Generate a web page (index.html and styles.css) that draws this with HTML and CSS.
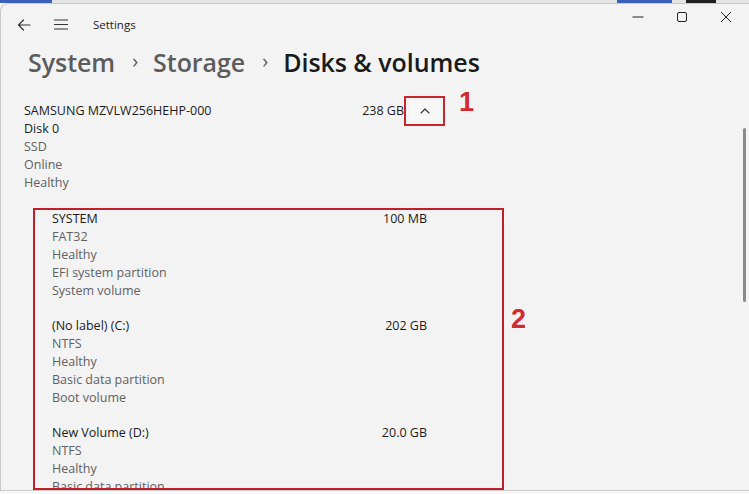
FILE: index.html
```html
<!DOCTYPE html>
<html>
<head>
<meta charset="utf-8">
<link rel="stylesheet" href="styles.css">
</head>
<body>
<div class="desk">
  <span class="seg blue w52"></span>
  <span class="seg grey w565"></span>
  <span class="seg blue w55"></span>
  <span class="seg grey w14"></span>
  <span class="seg dark w30"></span>
  <span class="seg grey fill"></span>
</div>
<div class="window">
  <div class="titlebar">
    <div class="tb-left">
      <svg class="ico back" width="14" height="12" viewBox="0 0 14 12"><path d="M13 6H1.5M6.5 1L1.5 6l5 5" fill="none" stroke="#333" stroke-width="1.2" stroke-linecap="round" stroke-linejoin="round"/></svg>
      <svg class="ico menu" width="14" height="11" viewBox="0 0 14 11"><path d="M0.5 1h13M0.5 5.5h13M0.5 10h13" fill="none" stroke="#333" stroke-width="1.2" stroke-linecap="round"/></svg>
      <span class="app">Settings</span>
    </div>
    <div class="controls">
      <span class="ctl"><svg width="12" height="12" viewBox="0 0 12 12"><path d="M0.5 6h11" stroke="#222" stroke-width="1"/></svg></span>
      <span class="ctl"><svg width="12" height="12" viewBox="0 0 12 12"><rect x="1.5" y="1.5" width="9" height="9" rx="1.5" fill="none" stroke="#222" stroke-width="1"/></svg></span>
      <span class="ctl"><svg width="12" height="12" viewBox="0 0 12 12"><path d="M1 1l10 10M11 1L1 11" stroke="#222" stroke-width="1"/></svg></span>
    </div>
  </div>
  <div class="content">
    <div class="crumbs">
      <span class="crumb">System</span>
      <span class="sep">›</span>
      <span class="crumb">Storage</span>
      <span class="sep">›</span>
      <span class="crumb current">Disks &amp; volumes</span>
    </div>
    <div class="disk">
      <div class="disk-head">
        <span class="name">SAMSUNG MZVLW256HEHP-000</span>
        <span class="size">238 GB</span>
        <span class="expand">
          <svg width="10" height="6" viewBox="0 0 10 6"><path d="M1 5l4-4 4 4" fill="none" stroke="#333" stroke-width="1.1" stroke-linecap="round" stroke-linejoin="round"/></svg>
          <span class="mark one">1</span>
        </span>
      </div>
      <div class="line primary">Disk 0</div>
      <div class="line">SSD</div>
      <div class="line">Online</div>
      <div class="line">Healthy</div>
    </div>
    <div class="parts-wrap">
      <span class="mark two">2</span>
      <div class="parts">
        <div class="part">
          <div class="part-head"><span>SYSTEM</span><span>100 MB</span></div>
          <div class="line">FAT32</div>
          <div class="line">Healthy</div>
          <div class="line">EFI system partition</div>
          <div class="line">System volume</div>
        </div>
        <div class="part">
          <div class="part-head"><span>(No label) (C:)</span><span>202 GB</span></div>
          <div class="line">NTFS</div>
          <div class="line">Healthy</div>
          <div class="line">Basic data partition</div>
          <div class="line">Boot volume</div>
        </div>
        <div class="part">
          <div class="part-head"><span>New Volume (D:)</span><span>20.0 GB</span></div>
          <div class="line">NTFS</div>
          <div class="line">Healthy</div>
          <div class="line">Basic data partition</div>
        </div>
      </div>
    </div>
    <span class="scrollbar"></span>
  </div>
</div>
</body>
</html>
```
FILE: styles.css
```css
* { box-sizing: border-box; }
html, body { margin: 0; padding: 0; }
body {
  width: 749px;
  height: 494px;
  overflow: hidden;
  background: #f7f7f7;
  font-family: "Open Sans", "Noto Sans", sans-serif;
  color: #1b1b1b;
}
.desk { display: flex; height: 3px; }
.seg { display: block; height: 3px; }
.blue { background: #3a5fb8; }
.grey { background: #e4e4e4; }
.dark { background: #1f1f1f; }
.w52 { width: 52px; }
.w565 { width: 565px; }
.w55 { width: 55px; }
.w14 { width: 14px; }
.w30 { width: 30px; }
.fill { flex: 1; }

.window {
  height: 488px;
  background: #f3f3f3;
  border: 1px solid #c9c9c9;
  border-right: none;
  border-top-left-radius: 8px;
  display: flex;
  flex-direction: column;
  overflow: hidden;
}
.titlebar {
  height: 41px;
  display: flex;
  justify-content: space-between;
  align-items: flex-start;
}
.tb-left {
  height: 41px;
  display: flex;
  align-items: center;
  padding-left: 16px;
}
.ico { display: block; }
.back { margin-right: 23px; }
.menu { margin-right: 25px; }
.app { font-size: 11.5px; color: #1b1b1b; }
.controls { display: flex; height: 25px; align-items: center; padding-right: 1px; }
.ctl { width: 44px; display: flex; justify-content: center; }
.ctl svg { display: block; }

.content {
  position: relative;
  flex: 1;
  padding-left: 23px;
  overflow: hidden;
}
.crumbs {
  height: 34px;
  display: flex;
  align-items: center;
  padding-left: 4px;
  font-size: 25px;
  font-weight: 600;
  letter-spacing: -0.05px;
}
.crumb { color: #5c5c5c; }
.crumb.current { color: #1a1a1a; }
.sep {
  color: #5c5c5c;
  font-weight: 400;
  font-size: 20px;
  margin: 0 15px 0 17px;
  position: relative;
  top: -2px;
}

.disk { margin-top: 22px; width: 421px; font-size: 12.5px; }
.disk-head {
  display: flex;
  align-items: center;
  height: 19px;
}
.name { flex: 1; color: #1b1b1b; }
.size { color: #1b1b1b; margin-right: 0; }
.expand {
  position: relative;
  width: 41px;
  height: 30px;
  margin: -5px 0 -6px;
  border: 2px solid #c8242c;
  background: #f7f7f7;
  box-shadow: inset 0 0 0 3px #f3f3f3;
  display: flex;
  align-items: center;
  justify-content: center;
}
.line { height: 18px; line-height: 18px; color: #616161; }
.line.primary { color: #1b1b1b; }

.mark {
  position: absolute;
  font-family: "Liberation Sans", sans-serif;
  font-weight: 700;
  font-size: 27px;
  color: #d32a2f;
  line-height: 1;
}
.one { left: 53px; top: -9px; }
.two { left: 478px; top: 98px; }

.parts-wrap {
  position: relative;
  margin-top: 16px;
  margin-left: 9px;
  width: 471px;
}
.parts {
  width: 471px;
  height: 282px;
  overflow: hidden;
  border: 2px solid #c01f2a;
  padding: 0 75px 0 17px;
  font-size: 12.5px;
}
.part { margin-bottom: 17px; }
.part-head {
  display: flex;
  justify-content: space-between;
  height: 18px;
  line-height: 18px;
  color: #1b1b1b;
}
.scrollbar {
  position: absolute;
  right: 3px;
  top: 83px;
  width: 3px;
  height: 174px;
  border-radius: 2px;
  background: #8a8a8a;
}
```
